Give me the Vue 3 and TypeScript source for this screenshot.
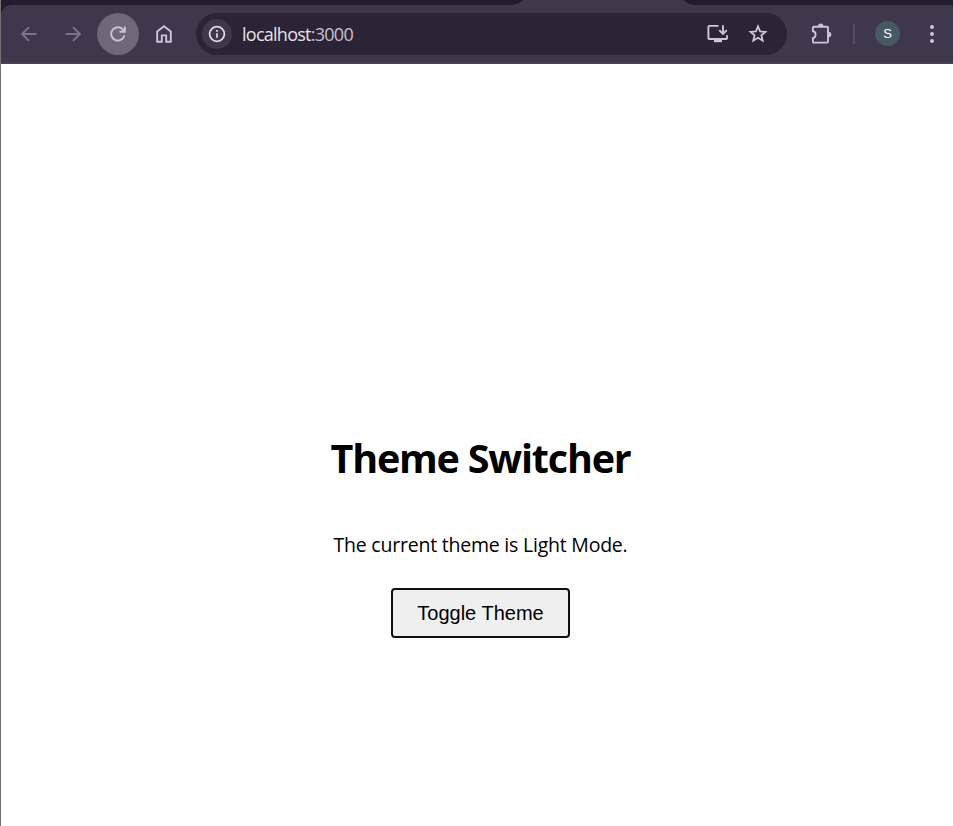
<script setup lang="ts">
import { computed, ref } from 'vue'

const isLight = ref(true)
const themeName = computed(() => (isLight.value ? 'Light' : 'Dark'))

function toggleTheme(): void {
  isLight.value = !isLight.value
}
</script>

<template>
  <div class="window">
    <header class="chrome">
      <div class="tabs">
        <svg class="active-tab" width="188" height="5" viewBox="0 0 188 5">
          <path d="M0 5C6 5 11 3 14 0H174C177 3 182 5 188 5Z" fill="#3f374b" />
        </svg>
      </div>
      <div class="toolbar">
        <nav class="nav">
          <span class="slot back">
            <svg width="16" height="16" viewBox="0 0 16 16" fill="none" stroke="#7d738a" stroke-width="1.9">
              <path d="M15.3 8H1.5M8 1.2 1.2 8 8 14.8" />
            </svg>
          </span>
          <span class="slot forward">
            <svg width="16" height="16" viewBox="0 0 16 16" fill="none" stroke="#7d738a" stroke-width="1.9">
              <path d="M.7 8h13.8M8 1.2 14.8 8 8 14.8" />
            </svg>
          </span>
          <span class="slot reload">
            <svg width="16" height="16" viewBox="0 0 16 16" fill="none" stroke="#cdc3dc" stroke-width="1.9">
              <path d="M14.4 9.5A6.7 6.7 0 1 1 13.2 3.8L14.7 5.6M14.8 .5V5.8H9.5" />
            </svg>
          </span>
          <span class="slot home">
            <svg width="16" height="18" viewBox="0 0 16 18" fill="none" stroke="#cdc3dc" stroke-width="1.9">
              <path d="M1.2 6.5 8 1.3l6.8 5.2v10.2h-4.6v-6.3H5.8v6.3H1.2Z" />
            </svg>
          </span>
        </nav>
        <div class="omnibox">
          <span class="info">
            <svg width="18" height="18" viewBox="0 0 18 18" fill="none" stroke="#ded8e0">
              <circle cx="9" cy="9" r="7.4" stroke-width="1.8" />
              <path d="M9 8.2v4.5M9 5v1.8" stroke-width="1.8" />
            </svg>
          </span>
          <span class="url">localhost<span class="port">:3000</span></span>
          <svg class="install" width="22" height="20" viewBox="0 0 22 20" fill="none" stroke="#cec7cf" stroke-width="1.9">
            <path d="M11.5 1.9H2.2Q1.4 1.9 1.4 2.7V14.2Q1.4 15 2.2 15H19.2Q20 15 20 14.2V11.2" />
            <path d="M16 1.2v8.2M12.2 6.1 16 9.9l3.8-3.8" />
            <path d="M7 15h8v3.2H7Z" fill="#cec7cf" stroke="none" />
          </svg>
          <svg class="star" width="20" height="20" viewBox="0 0 20 20" fill="none" stroke="#cec7cf" stroke-width="1.8">
            <path d="m10 2.4 2.1 5 5.4.5-4.1 3.5 1.3 5.3-4.7-2.9-4.7 2.9 1.3-5.3-4.1-3.5 5.4-.5Z" />
          </svg>
        </div>
        <svg class="puzzle" width="22" height="22" viewBox="0 0 22 22">
          <path d="M2.8 3.7H16Q17 3.7 17 4.7V18.6Q17 19.6 16 19.6H2.8Q1.9 19.6 1.9 18.6V15.2C5.5 14.2 5.5 9 1.9 8V4.7Q1.9 3.7 2.8 3.7Z" fill="none" stroke="#cdc3dc" stroke-width="1.9" />
          <path d="M7 3.2a2.7 2.7 0 0 1 5.4 0ZM17.6 8.8a2.7 2.7 0 0 1 0 5.4Z" fill="#cdc3dc" />
        </svg>
        <span class="divider"></span>
        <span class="avatar">S</span>
        <span class="menu"><i></i><i></i><i></i></span>
      </div>
    </header>
    <main class="page">
      <h1>Theme Switcher</h1>
      <p>The current theme is {{ themeName }} Mode.</p>
      <button type="button" @click="toggleTheme">Toggle Theme</button>
    </main>
  </div>
</template>

<style>
body {
  margin: 0;
  overflow: hidden;
  background: #fff;
}
</style>

<style scoped>
.window {
  box-sizing: border-box;
  width: 953px;
  height: 826px;
  border-left: 1px solid #747474;
  color: #000;
  font-family: "Open Sans", "Noto Sans", sans-serif;
}

svg {
  display: block;
  flex: none;
}

.chrome {
  height: 64px;
  background: #221c2c;
}

.tabs {
  height: 5px;
}

.active-tab {
  margin-left: 508px;
}

.toolbar {
  box-sizing: border-box;
  display: flex;
  align-items: center;
  height: 59px;
  border-bottom: 2px solid #49434e;
  border-radius: 10px 3px 0 0;
  background: #3f374b;
}

.nav {
  display: flex;
  align-items: center;
  width: 195px;
}

.slot {
  display: grid;
  place-items: center;
  flex: none;
  width: 42px;
  height: 42px;
}

.back {
  margin-left: 7px;
}

.forward {
  margin-left: 2px;
}

.reload {
  margin-left: 3px;
  border-radius: 50%;
  background: #6f6879;
}

.home {
  margin-left: 3.5px;
}

.omnibox {
  box-sizing: border-box;
  display: flex;
  align-items: center;
  width: 591px;
  height: 42px;
  padding: 0 19.5px 0 6px;
  border-radius: 21px;
  background: #2b2436;
}

.info {
  display: grid;
  place-items: center;
  width: 30px;
  height: 30px;
  border-radius: 50%;
  background: #3f374b;
}

.url {
  margin-left: 10px;
  color: #e7e0e8;
  font-size: 18px;
  line-height: 24px;
  letter-spacing: -0.74px;
}

.port {
  color: #c8c0ca;
}

.install {
  margin-left: auto;
}

.star {
  margin-left: 18.5px;
}

.puzzle {
  margin-left: 24px;
}

.divider {
  width: 2px;
  height: 20px;
  margin-left: 19.5px;
  background: #564d62;
}

.avatar {
  width: 25px;
  height: 25px;
  margin-left: 20.5px;
  border-radius: 50%;
  background: #455a64;
  color: #fff;
  font: 13px/25px "Liberation Sans", Arial, sans-serif;
  text-align: center;
}

.menu {
  display: grid;
  gap: 3px;
  margin-left: 30px;
}

.menu i {
  width: 4px;
  height: 4px;
  border-radius: 50%;
  background: #cdc3dc;
}

.page {
  box-sizing: border-box;
  display: flex;
  flex-direction: column;
  align-items: center;
  height: 762px;
  padding: 367px 0 0 7px;
}

h1 {
  margin: 0;
  font-size: 39.5px;
  font-weight: 700;
  line-height: 54px;
  letter-spacing: -1.2px;
  white-space: nowrap;
}

p {
  margin: 46px 0 0;
  font-size: 19.5px;
  line-height: 28px;
  letter-spacing: -0.22px;
  white-space: nowrap;
}

button {
  box-sizing: border-box;
  width: 179px;
  height: 50px;
  margin: 29px 0 0;
  padding: 0;
  border: 2px solid #101010;
  border-radius: 4px;
  background: #efefef;
  color: #000;
  font: 20px/24px "Liberation Sans", Arial, sans-serif;
}
</style>
